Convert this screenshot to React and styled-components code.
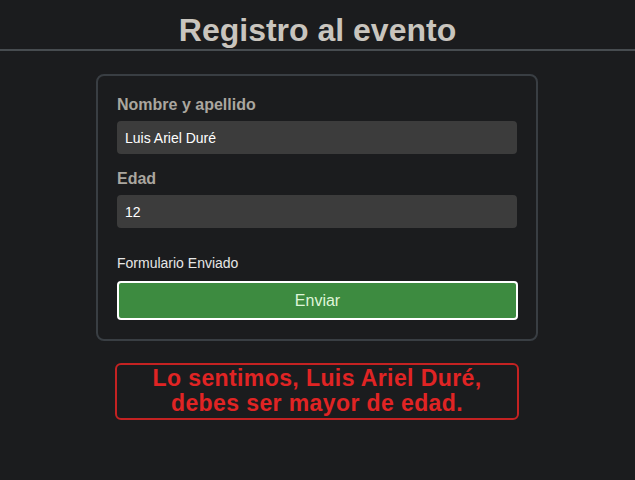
import React from 'react'
import styled, { createGlobalStyle } from 'styled-components'

const GlobalStyle = createGlobalStyle`
  body {
    margin: 0;
    background: #1b1c1e;
    font-family: "Liberation Sans", Arial, sans-serif;
  }
`

function App() {
  return (
    <Page>
      <GlobalStyle />
      <Header>
        <Title>Registro al evento</Title>
      </Header>
      <Card>
        <Label>Nombre y apellido</Label>
        <Input value="Luis Ariel Duré" readOnly />
        <Label spaced>Edad</Label>
        <Input value="12" readOnly />
        <Status>Formulario Enviado</Status>
        <SubmitButton>Enviar</SubmitButton>
      </Card>
      <Alert>
        Lo sentimos, Luis Ariel Duré,
        <br />
        debes ser mayor de edad.
      </Alert>
    </Page>
  )
}

export default App

const Page = styled.div`
  min-height: 480px;
  display: flex;
  flex-direction: column;
  align-items: center;
`

const Header = styled.header`
  align-self: stretch;
  padding-top: 12px;
  border-bottom: 2px solid #474c50;
  text-align: center;
`

const Title = styled.h1`
  margin: 0;
  font-size: 32px;
  line-height: 37px;
  font-weight: bold;
  color: #c9c5be;
`

const Card = styled.form`
  width: 400px;
  margin: 23px 1px 0 0;
  padding: 20px 19px 19px;
  border: 2px solid #393e43;
  border-radius: 8px;
  display: flex;
  flex-direction: column;
`

const Label = styled.label`
  display: block;
  font-size: 16px;
  line-height: 18px;
  font-weight: bold;
  color: #aaa69f;
  margin-top: ${(p) => (p.spaced ? '16px' : '0')};
  margin-bottom: 7px;
`

const Input = styled.input`
  box-sizing: border-box;
  width: 400px;
  height: 33px;
  padding: 0 8px;
  border: none;
  border-radius: 4px;
  background: #3c3c3c;
  color: #ffffff;
  font-family: inherit;
  font-size: 14px;
  outline: none;
`

const Status = styled.p`
  margin: 27px 0 10px;
  font-size: 14px;
  line-height: 16px;
  color: #e6e6e6;
`

const SubmitButton = styled.button`
  box-sizing: border-box;
  width: 401px;
  height: 39px;
  border: 2px solid #ffffff;
  border-radius: 4px;
  background: #3d8b40;
  color: #dff5d8;
  font-family: inherit;
  font-size: 16px;
  cursor: pointer;
`

const Alert = styled.div`
  box-sizing: border-box;
  width: 404px;
  margin: 22px 1px 0 0;
  padding: 1px 0 2px;
  border: 2px solid #c42222;
  border-radius: 6px;
  text-align: center;
  font-size: 23px;
  line-height: 25px;
  letter-spacing: 0.4px;
  font-weight: bold;
  color: #e02424;
`
